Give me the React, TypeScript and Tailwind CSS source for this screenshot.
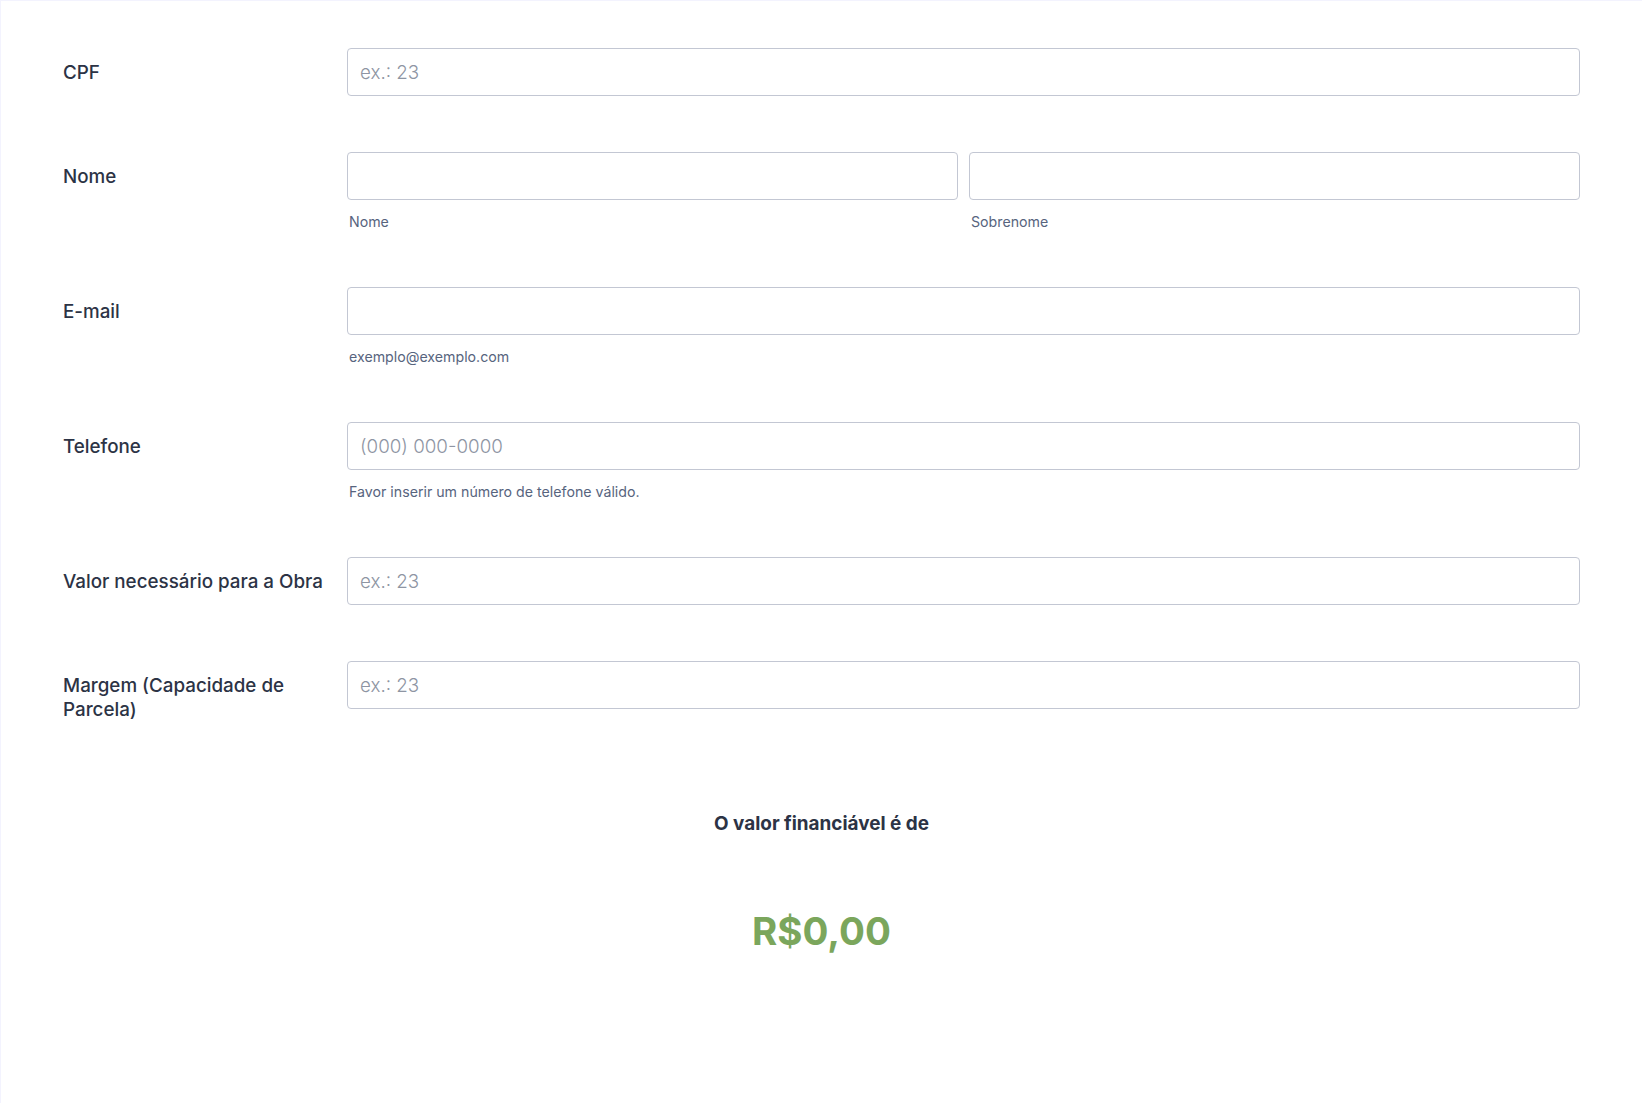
import React from "react";

const font = { fontFamily: "Inter, 'Noto Sans', sans-serif" };

function Label({ children }: { children: React.ReactNode }) {
  return (
    <div className="w-[284px] shrink-0 pt-[13px] pr-2 text-[18.8px] leading-[24px] font-medium text-[#2c3345]">
      {children}
    </div>
  );
}

function Input({ placeholder }: { placeholder?: string }) {
  return (
    <input
      type="text"
      placeholder={placeholder}
      className="h-[48px] w-full rounded-[4px] border border-[#c3c7d3] bg-white px-3 text-[18.8px] font-light text-[#2c3345] placeholder:text-[#8e95a3] outline-none"
      style={font}
    />
  );
}

function Sub({ children }: { children: React.ReactNode }) {
  return (
    <div className="pl-[2px] pt-[14px] pb-[1px] text-[14.2px] leading-[16px] text-[#57647e]">
      {children}
    </div>
  );
}

export default function App() {
  return (
    <div className="min-h-[1103px] bg-[#f3f3fe] pl-px pt-px" style={font}>
      <div className="min-h-[1102px] bg-white pt-[19px] pl-[62px] pr-[62px]">
        <div className="flex py-[28px]">
          <Label>CPF</Label>
          <div className="flex-1">
            <Input placeholder="ex.: 23" />
          </div>
        </div>
        <div className="flex py-[28px]">
          <Label>Nome</Label>
          <div className="flex flex-1 gap-[11px]">
            <div className="flex-1">
              <Input />
              <Sub>Nome</Sub>
            </div>
            <div className="flex-1">
              <Input />
              <Sub>Sobrenome</Sub>
            </div>
          </div>
        </div>
        <div className="flex py-[28px]">
          <Label>E-mail</Label>
          <div className="flex-1">
            <Input />
            <Sub>exemplo@exemplo.com</Sub>
          </div>
        </div>
        <div className="flex py-[28px]">
          <Label>Telefone</Label>
          <div className="flex-1">
            <Input placeholder="(000) 000-0000" />
            <Sub>Favor inserir um número de telefone válido.</Sub>
          </div>
        </div>
        <div className="flex py-[28px]">
          <Label>Valor necessário para a Obra</Label>
          <div className="flex-1">
            <Input placeholder="ex.: 23" />
          </div>
        </div>
        <div className="flex pt-[28px]">
          <Label>Margem (Capacidade de Parcela)</Label>
          <div className="flex-1">
            <Input placeholder="ex.: 23" />
          </div>
        </div>
        <div className="mt-[90px] text-center text-[18.9px] leading-[24px] font-bold text-[#2c3345]">
          O valor financiável é de
        </div>
        <div className="mt-[73px] text-center text-[38.5px] leading-[44px] font-bold text-[#7ba65c]">
          R$0,00
        </div>
      </div>
    </div>
  );
}
